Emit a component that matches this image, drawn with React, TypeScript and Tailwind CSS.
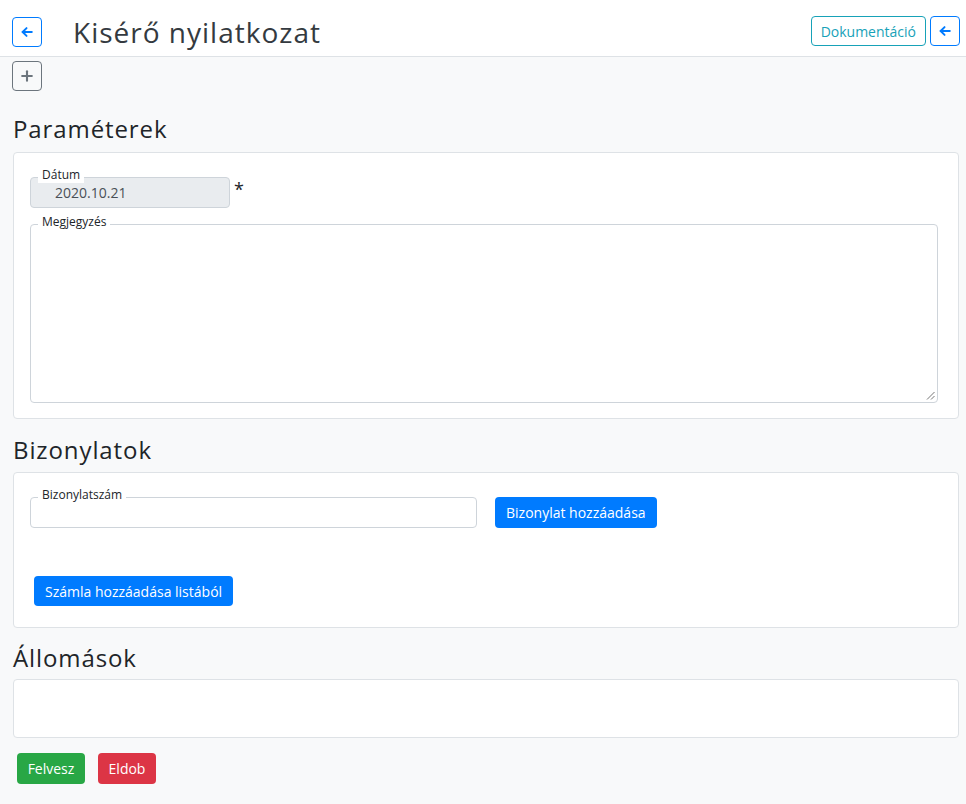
import React from "react";

function ArrowLeft() {
  return (
    <svg width="14" height="14" viewBox="0 0 16 16" fill="none" stroke="currentColor" strokeWidth="2.2" strokeLinecap="round" strokeLinejoin="round">
      <path d="M13.5 8H3" />
      <path d="M7.5 3.5L3 8l4.5 4.5" />
    </svg>
  );
}

function Plus() {
  return (
    <svg width="14" height="14" viewBox="0 0 16 16" fill="none" stroke="currentColor" strokeWidth="2.4" strokeLinecap="round">
      <path d="M8 2.5v11" />
      <path d="M2.5 8h11" />
    </svg>
  );
}

function FieldLabel({ children }: { children: React.ReactNode }) {
  return (
    <span className="absolute left-[7px] top-[-11px] bg-white px-[4px] text-[12px] leading-[16px] text-[#212529]">
      {children}
    </span>
  );
}

export default function App() {
  return (
    <div className="min-h-[804px] bg-[#f8f9fa] text-[#212529]" style={{ fontFamily: '"Open Sans", "Noto Sans", sans-serif' }}>
      <header className="flex h-[57px] items-start justify-between border-b border-[#dee2e6] bg-white pl-[12px] pr-[6px] pt-[16px]">
        <div className="flex items-center">
          <button className="flex h-[30px] w-[30px] items-center justify-center rounded-[4px] border border-[#007bff] text-[#007bff]">
            <ArrowLeft />
          </button>
          <h1 className="ml-[31px] text-[28px] leading-[32px] tracking-[1px] text-[#343a40]">Kisérő nyilatkozat</h1>
        </div>
        <div className="flex items-center gap-[4px]">
          <button className="h-[30px] rounded-[4px] border border-[#17a2b8] px-[9px] text-[14px] text-[#17a2b8]">Dokumentáció</button>
          <button className="flex h-[30px] w-[30px] items-center justify-center rounded-[4px] border border-[#007bff] text-[#007bff]">
            <ArrowLeft />
          </button>
        </div>
      </header>

      <div className="px-[12px] pt-[4px]">
        <button className="flex h-[30px] w-[30px] items-center justify-center rounded-[4px] border border-[#6c757d] text-[#6c757d]">
          <Plus />
        </button>
      </div>

      <main className="px-[13px] pr-[7px]">
        <h2 className="mt-[22px] text-[24px] leading-[32px] tracking-[0.9px] text-[#212529]">Paraméterek</h2>
        <section className="mt-[7px] rounded-[4px] border border-[#dee2e6] bg-white pl-[16px] pr-[20px] pb-[15px] pt-[24px]">
          <div className="flex items-start">
            <div className="relative h-[31px] w-[200px] rounded-[4px] border border-[#ced4da] bg-[#e9ecef]">
              <FieldLabel>Dátum</FieldLabel>
              <div className="pl-[24px] pt-[5px] text-[14px] leading-[20px] text-[#495057]">2020.10.21</div>
            </div>
            <span className="ml-[4px] mt-[2px] text-[18px] leading-[20px]">*</span>
          </div>
          <div className="relative mt-[16px] h-[179px] rounded-[4px] border border-[#ced4da] bg-white">
            <FieldLabel>Megjegyzés</FieldLabel>
            <svg className="absolute bottom-[2px] right-[2px]" width="9" height="9" viewBox="0 0 9 9" stroke="#777" strokeWidth="1">
              <path d="M8.5 1L1 8.5" />
              <path d="M8.5 5L5 8.5" />
            </svg>
          </div>
        </section>

        <h2 className="mt-[15px] text-[24px] leading-[32px] tracking-[0.9px]">Bizonylatok</h2>
        <section className="mt-[6px] rounded-[4px] border border-[#dee2e6] bg-white px-[16px] pb-[21px] pt-[24px]">
          <div className="flex items-start">
            <div className="relative h-[31px] w-[447px] rounded-[4px] border border-[#ced4da] bg-white">
              <FieldLabel>Bizonylatszám</FieldLabel>
            </div>
            <button className="ml-[18px] h-[31px] rounded-[4px] bg-[#007bff] px-[11px] text-[14px] text-white">Bizonylat hozzáadása</button>
          </div>
          <button className="ml-[4px] mt-[48px] h-[30px] rounded-[4px] bg-[#007bff] px-[11px] text-[14px] text-white">Számla hozzáadása listából</button>
        </section>

        <h2 className="mt-[14px] text-[24px] leading-[32px] tracking-[0.9px]">Állomások</h2>
        <section className="mt-[5px] h-[59px] rounded-[4px] border border-[#dee2e6] bg-white" />

        <div className="mt-[15px] flex gap-[13px] pl-[4px]">
          <button className="flex h-[31px] w-[68px] items-center justify-center rounded-[4px] bg-[#28a745] text-[14px] text-white">Felvesz</button>
          <button className="flex h-[31px] w-[58px] items-center justify-center rounded-[4px] bg-[#dc3545] text-[14px] text-white">Eldob</button>
        </div>
      </main>
    </div>
  );
}
